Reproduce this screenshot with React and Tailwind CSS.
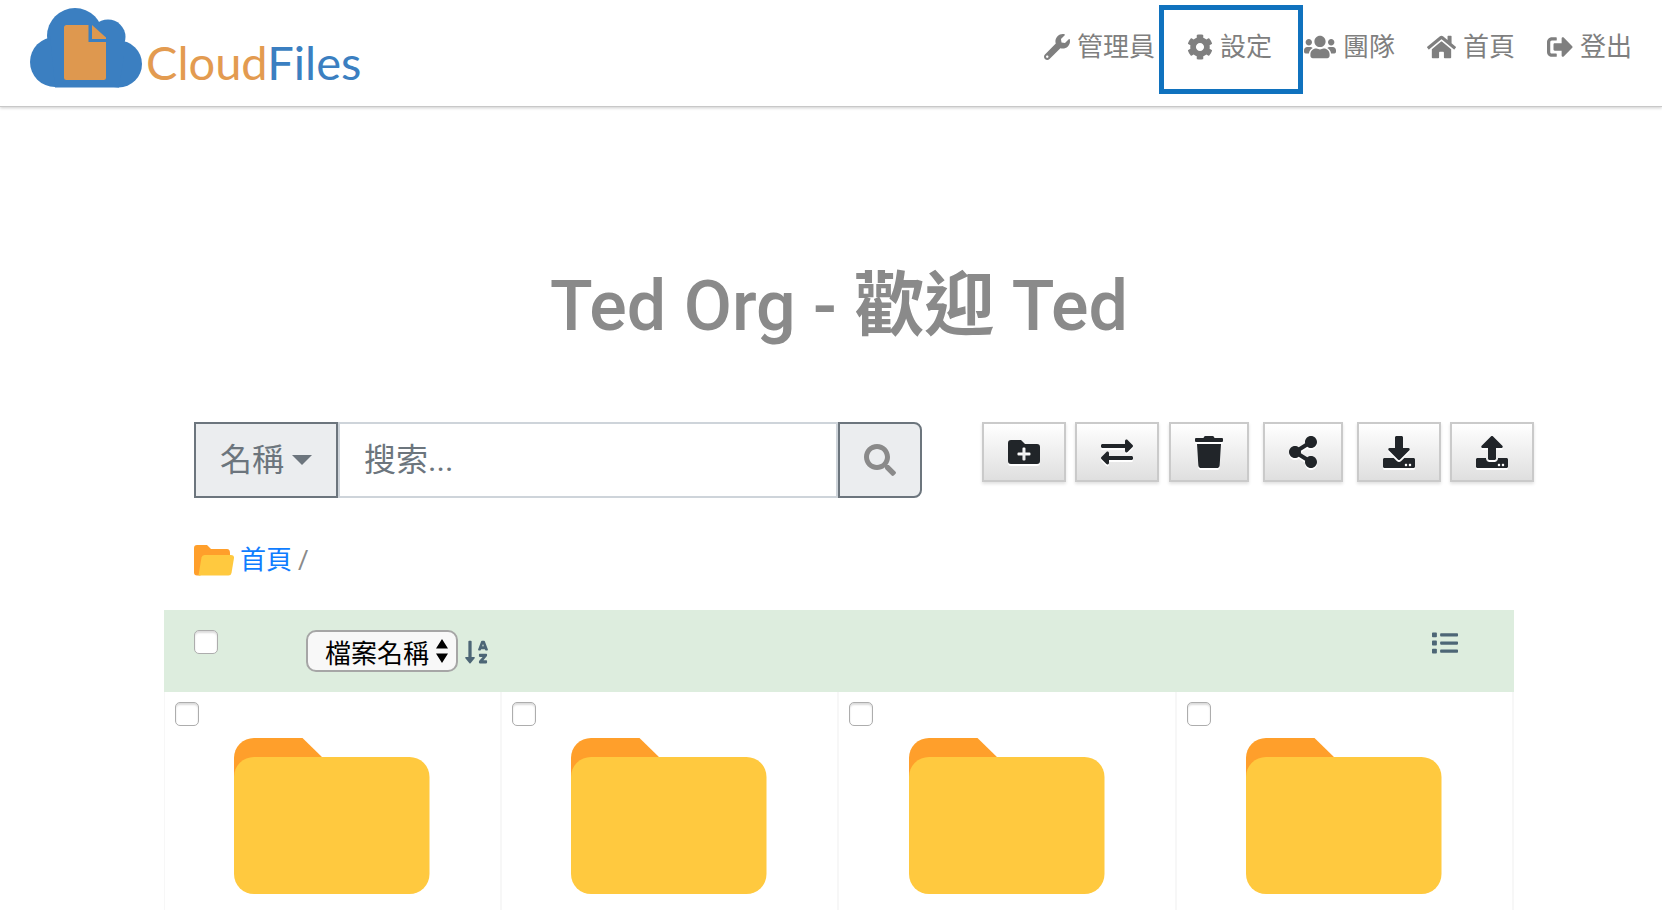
import React, { useState } from 'react';
import {
    FaWrench,
    FaCog,
    FaUsers,
    FaHome,
    FaSignOutAlt,
    FaSearch,
    FaFolderPlus,
    FaExchangeAlt,
    FaTrash,
    FaShareAlt,
    FaDownload,
    FaUpload,
    FaSortAlphaDown,
    FaList,
} from 'react-icons/fa';

const navItems = [
    { label: '管理員', icon: FaWrench, iconClass: 'w-[26px]' },
    { label: '設定', icon: FaCog, iconClass: 'w-[26px]', highlighted: true },
    { label: '團隊', icon: FaUsers, iconClass: 'w-8' },
    { label: '首頁', icon: FaHome, iconClass: 'w-[29px]' },
    { label: '登出', icon: FaSignOutAlt, iconClass: 'w-[26px]' },
];

const actions = [
    { label: '新增資料夾', icon: FaFolderPlus, width: 'w-[84px]' },
    { label: '移動', icon: FaExchangeAlt, width: 'w-[84px]' },
    { label: '刪除', icon: FaTrash, width: 'w-20' },
    { label: '分享', icon: FaShareAlt, width: 'w-20' },
    { label: '下載', icon: FaDownload, width: 'w-[84px]' },
    { label: '上傳', icon: FaUpload, width: 'w-[84px]' },
];

const folders = [1, 2, 3, 4];

const CloudLogo = () => (
    <svg className="w-28 h-20 shrink-0" viewBox="0 0 112 80" aria-hidden="true">
        <g fill="#3b7fc1">
            <circle cx="45" cy="28" r="28" />
            <circle cx="78" cy="29" r="17.5" />
            <circle cx="25" cy="54" r="25" />
            <circle cx="88.500" cy="56" r="23.500" />
            <path d="M20 28h74v20l-5 31.500H25z" />
        </g>
        <path d="M37 17h21.500v17H76v35.500a2.500 2.500 0 0 1-2.500 2.500h-37a2.500 2.500 0 0 1-2.500-2.500v-50a2.500 2.500 0 0 1 3-2.500z" fill="#de984f" />
        <path d="M62 17l14 12.500V31H62z" fill="#de984f" />
    </svg>
);

const FolderIcon = () => (
    <svg className="w-[196px] h-[156px]" viewBox="0 0 196 156" aria-hidden="true">
        <path d="M20 0h48.500L90 21v20H0V20A20 20 0 0 1 20 0z" fill="#ff9f2b" />
        <rect x="0" y="19" width="195.500" height="137" rx="20" fill="#ffc93f" />
    </svg>
);

const OpenFolderIcon = () => (
    <svg className="w-10 h-[31px]" viewBox="0 0 40 31" aria-hidden="true">
        <path d="M3 0h10l4 4h16q3 0 3 4v8L6 30.500H3q-3 0-3-3V3q0-3 3-3z" fill="#ff9f2b" />
        <path d="M10.500 10H37q3.500 0 3 3l-2.500 15q-.5 2.500-3 2.500H4.500L7.500 12.500q.5-2.500 3-2.500z" fill="#ffc93f" />
    </svg>
);

const Checkbox = ({ label }) => (
    <input
        type="checkbox"
        aria-label={label}
        className="block size-6 shrink-0 appearance-none rounded-[5px] border border-[#adadad] bg-white shadow-[inset_0_2px_2px_rgba(0,0,0,0.14)] checked:bg-blue-500"
    />
);

const Header = () => (
    <header className="flex items-start justify-between border-b border-[#c8c8c8] bg-white pt-2 pr-[14px] pb-[18px] pl-[30px] shadow-[0_1px_3px_rgba(0,0,0,0.2)]">
        <a href="#" className="flex items-start gap-1">
            <CloudLogo />
            <span className="pt-7 font-['Lato',sans-serif] text-[47px] leading-[52px]">
                <span className="text-[#e39b50]">Cloud</span>
                <span className="text-[#3b7fc1]">Files</span>
            </span>
        </a>
        <nav className="flex pt-[19px]">
            {navItems.map(({ label, icon: Icon, iconClass, highlighted }) => (
                <a
                    key={label}
                    href="#"
                    className="relative flex items-center gap-[7px] px-4 text-[26px] leading-10 text-[#7f7f7f]"
                >
                    <Icon className={`h-[26px] ${iconClass}`} />
                    {label}
                    {highlighted && (
                        <span className="pointer-events-none absolute -top-[22px] -right-[15px] -bottom-[27px] -left-3 border-[5px] border-[#1072be]" />
                    )}
                </a>
            ))}
        </nav>
    </header>
);

const SearchBar = () => {
    const [query, setQuery] = useState('');

    return (
        <form className="flex h-[76px] text-[32px] text-[#6c757d]" onSubmit={(e) => e.preventDefault()}>
            <button
                type="button"
                className="flex shrink-0 items-center gap-2 border-2 border-[#6c757d] bg-[#ebedef] px-6"
            >
                名稱
                <svg className="h-[10px] w-5" viewBox="0 0 20 10" aria-hidden="true">
                    <path d="M0 0h20L10 10z" fill="currentColor" />
                </svg>
            </button>
            <input
                type="text"
                aria-label="搜索"
                placeholder="搜索..."
                value={query}
                onChange={(e) => setQuery(e.target.value)}
                className="min-w-0 flex-1 border-2 border-[#ced4da] bg-white px-6 outline-none placeholder:text-[#6c757d]"
            />
            <button
                type="submit"
                aria-label="搜索"
                className="flex w-[84px] shrink-0 items-center justify-center rounded-r-lg border-2 border-[#6c757d] bg-[#ebedef]"
            >
                <FaSearch className="size-8 text-[#8a8a8a]" />
            </button>
        </form>
    );
};

const ActionBar = () => (
    <div className="-mr-[30px] grid grid-cols-6">
        {actions.map(({ label, icon: Icon, width }) => (
            <button
                key={label}
                type="button"
                aria-label={label}
                className={`flex h-[60px] items-center justify-center border-2 border-[#cacaca] bg-linear-to-b from-white to-[#dfdfdf] text-[#212529] shadow-[0_2px_3px_rgba(0,0,0,0.12)] ${width}`}
            >
                <Icon className="size-8 drop-shadow-[0_2px_0_#ffffff]" />
            </button>
        ))}
    </div>
);

const ListToolbar = () => (
    <div className="flex items-start bg-[#ddedde] px-[30px] py-5">
        <Checkbox label="全選" />
        <div className="relative ml-[88px]">
            <select
                aria-label="排序"
                className="block h-[42px] w-[152px] appearance-none rounded-[10px] border-2 border-[#a6a6a6] bg-[#f8f8f8] pt-1 pl-[17px] text-[26px] leading-9 text-black"
            >
                <option>檔案名稱</option>
            </select>
            <svg className="pointer-events-none absolute top-[9px] right-[10px] h-6 w-3" viewBox="0 0 12 24" aria-hidden="true">
                <path d="M6 0l6 9.500H0zM6 24l6-9.500H0z" fill="#000" />
            </svg>
        </div>
        <button type="button" aria-label="排序方式" className="mt-[9px] ml-[7px] text-[#4d6676]">
            <FaSortAlphaDown className="h-[26px] w-[23px]" />
        </button>
        <button type="button" aria-label="列表" className="mr-[26px] ml-auto text-[#4d6676]">
            <FaList className="size-[26px]" />
        </button>
    </div>
);

const App = () => (
    <div className="flex min-h-screen flex-col bg-white font-[Roboto,'Noto_Sans_CJK_TC',sans-serif]">
        <Header />
        <main className="flex flex-1 flex-col pt-[154px] pr-[148px] pl-[164px]">
            <h1 className="text-center text-[70px] leading-[90px] font-medium text-[#8a8a8a]">
                Ted Org - <span className="font-bold">歡迎</span> Ted
            </h1>

            <div className="mt-[71px] grid grid-cols-12">
                <div className="col-span-7 px-[30px]">
                    <SearchBar />
                </div>
                <div className="col-span-5 pl-[30px]">
                    <ActionBar />
                </div>
            </div>

            <div className="mt-[42px] flex h-10 items-center gap-1.5 px-[30px] text-[26px] text-[#8a8a8a]">
                <OpenFolderIcon />
                <a href="#" className="text-[#0f7dff]">首頁</a>
                <span>/</span>
            </div>

            <div className="mt-[30px] flex flex-1 flex-col">
                <ListToolbar />
                <div className="grid flex-1 grid-cols-4">
                    {folders.map((id) => (
                        <div key={id} className="border-r-2 border-[#f7f7f7] px-[10px] pt-[10px] first:border-l">
                            <Checkbox label={`資料夾 ${id}`} />
                            <div className="mt-3 flex justify-center">
                                <FolderIcon />
                            </div>
                        </div>
                    ))}
                </div>
            </div>
        </main>
    </div>
);

export default App;
